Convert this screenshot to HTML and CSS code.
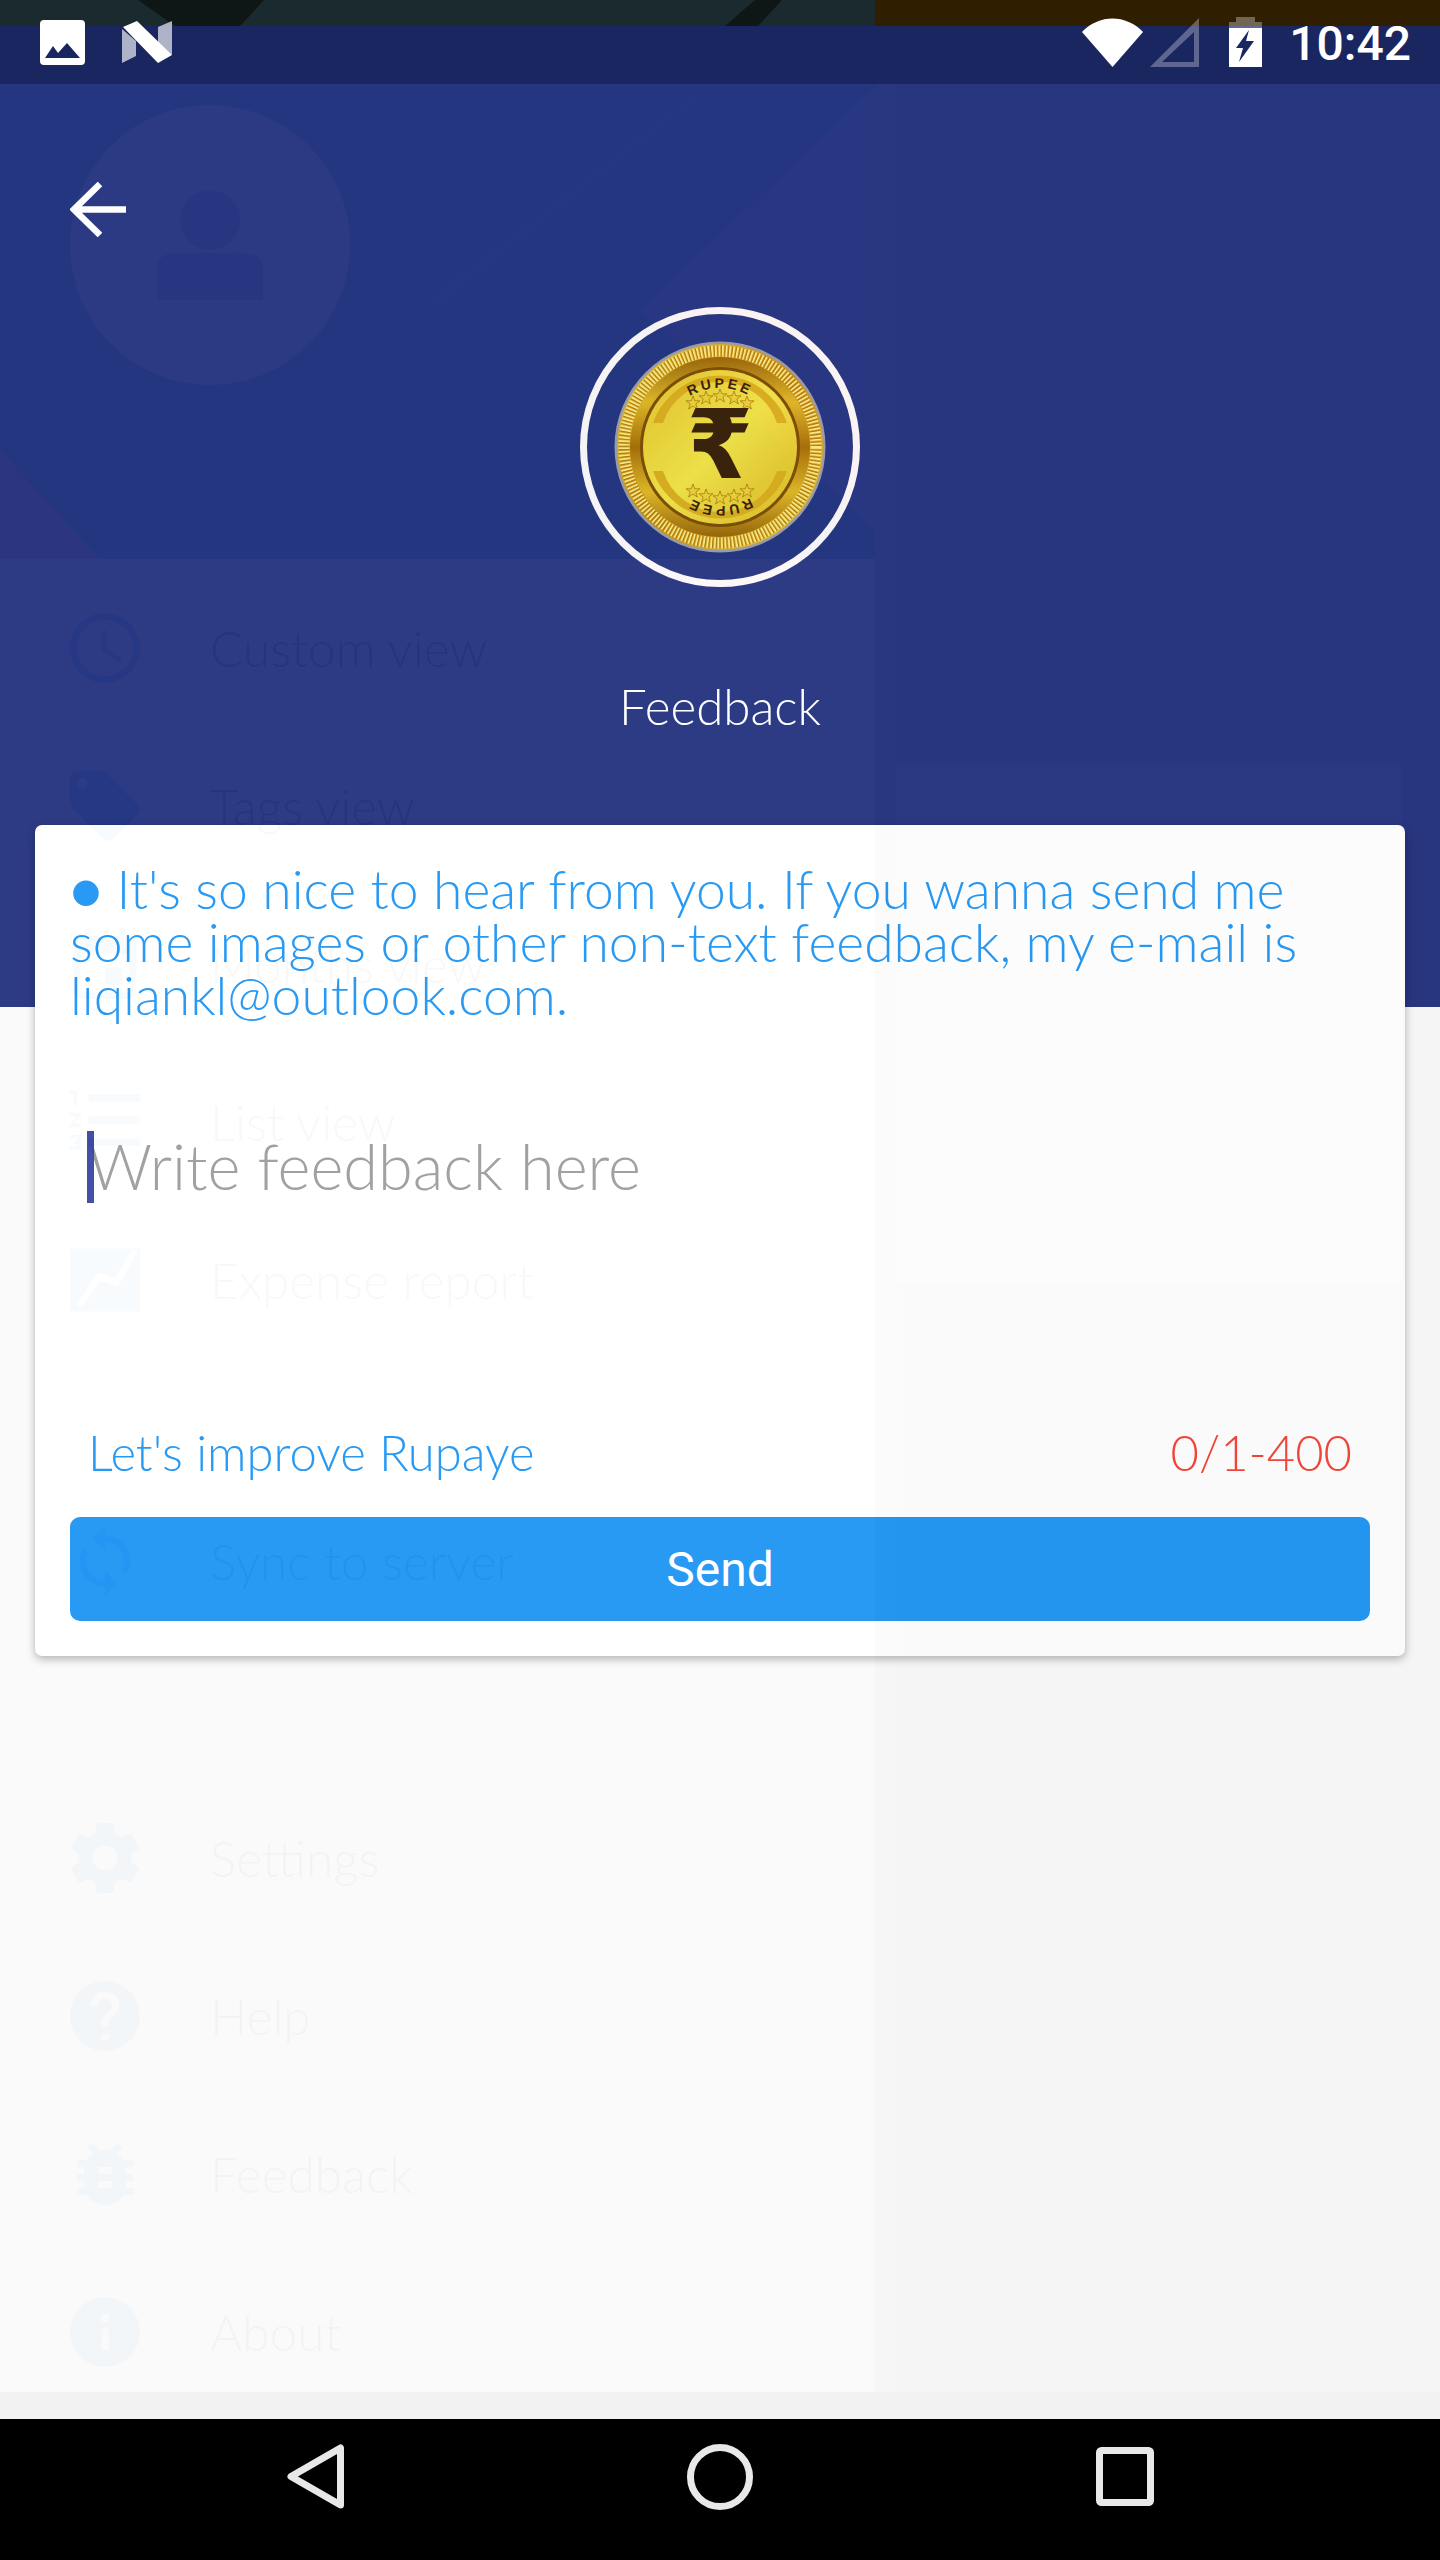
FILE: index.html
```html
<!DOCTYPE html>
<html lang="en">
<head>
<meta charset="utf-8">
<title>Feedback</title>
<link rel="stylesheet" href="styles.css">
</head>
<body>
<div class="screen">
  <header class="status">
    <svg class="wallpaper" viewBox="0 0 1440 26" aria-hidden="true">
      <polygon points="138,0 264,0 240,26 175,26" fill="#0e1616"/>
      <polygon points="755,0 782,0 758,26 725,26" fill="#0e1616"/>
    </svg>
    <svg class="st-img" viewBox="0 0 45 45" aria-hidden="true">
      <rect width="45" height="45" rx="4" fill="#fff"/>
      <path d="M5 38 13 26 18 33 27 23 40 38Z" fill="#1a2660"/>
    </svg>
    <svg class="st-n" viewBox="0 0 50 42" aria-hidden="true">
      <polygon points="0,8 0,42 14,35 14,20" fill="#fff" opacity=".65"/>
      <polygon points="50,0 36,6 36,23 50,34" fill="#fff" opacity=".65"/>
      <polygon points="1,6 15,0 50,34 36,42" fill="#fff"/>
    </svg>
    <div class="status-gap"></div>
    <svg class="st-wifi" viewBox="0 0 61 49" aria-hidden="true">
      <path d="M0 14C17-4 44-4 61 14L30.500 49Z" fill="#fff"/>
    </svg>
    <svg class="st-sig" viewBox="0 0 49 49" aria-hidden="true">
      <path d="M49 0V49H0ZM44 14 12 44H44Z" fill="#fff" fill-opacity=".3" fill-rule="evenodd"/>
    </svg>
    <svg class="st-bat" viewBox="0 0 33 50" aria-hidden="true">
      <path d="M7 0H26V5H33V13H0V5H7Z" fill="#fff" fill-opacity=".32"/>
      <path d="M0 11H33V50H0Z" fill="#fff"/>
      <path d="M20 13 7 31H14L10 45 25 24H17Z" fill="#1a2660"/>
    </svg>
    <span class="clock">10:42</span>
  </header>

  <section class="hero">
    <svg class="back" viewBox="0 0 56 55" aria-hidden="true">
      <path d="M56 27.500H5M30 2 4 27.500 30 53" fill="none" stroke="#fff" stroke-width="6.500"/>
    </svg>
    <div class="ring">
      <svg class="coin" viewBox="0 0 212 212" aria-label="Rupee coin logo">
        <defs>
          <linearGradient id="rim" x1="0" y1="0" x2="1" y2="1">
            <stop offset="0" stop-color="#f2cf3a"/><stop offset=".5" stop-color="#c98c0b"/><stop offset="1" stop-color="#f1cf3e"/>
          </linearGradient>
          <linearGradient id="band" x1="0" y1="0" x2="0" y2="1">
            <stop offset="0" stop-color="#9a6608"/><stop offset=".25" stop-color="#e2b824"/><stop offset=".5" stop-color="#a86e06"/><stop offset=".75" stop-color="#e2b824"/><stop offset="1" stop-color="#9a6608"/>
          </linearGradient>
          <linearGradient id="plate" x1="0" y1="0" x2="1" y2="1">
            <stop offset="0" stop-color="#e8c42a"/><stop offset=".5" stop-color="#f4e346"/><stop offset="1" stop-color="#dfb820"/>
          </linearGradient>
          <path id="arcT" d="M47 106A59 59 0 0 1 165 106"/>
          <path id="arcB" d="M165 106A59 59 0 0 1 47 106"/>
          <polygon id="star" points="0,-7 1.800,-2.200 7,-2.200 2.800,1 4.400,6 0,3 -4.400,6 -2.800,1 -7,-2.200 -1.800,-2.200"/>
        </defs>
        <circle cx="106" cy="106" r="105.500" fill="#9c9cab"/>
        <circle cx="106" cy="106" r="103" fill="url(#rim)"/>
        <circle cx="106" cy="106" r="96" fill="none" stroke="#fbe98a" stroke-width="11" stroke-dasharray="1.800 1.800"/>
        <circle cx="106" cy="106" r="96" fill="none" stroke="#b47a08" stroke-width="11" stroke-dasharray="1 2.600" stroke-dashoffset="1"/>
        <circle cx="106" cy="106" r="90" fill="url(#band)"/>
        <circle cx="106" cy="106" r="80" fill="#7d4c03"/>
        <circle cx="106" cy="106" r="77" fill="url(#plate)"/>
        <path d="M39 82A71 71 0 0 1 173 82L163 82A60 60 0 0 0 49 82Z" fill="#dcae1e"/>
        <path d="M39 130A71 71 0 0 0 173 130L163 130A60 60 0 0 1 49 130Z" fill="#dcae1e"/>
        <text class="coin-word"><textPath href="#arcT" startOffset="50%">RUPEE</textPath></text>
        <text class="coin-word"><textPath href="#arcB" startOffset="50%">RUPEE</textPath></text>
        <g fill="#efd139" stroke="#a97c0c" stroke-width=".8">
          <use href="#star" x="79" y="62"/><use href="#star" x="92" y="57"/><use href="#star" x="106" y="55"/><use href="#star" x="120" y="57"/><use href="#star" x="133" y="62"/>
          <use href="#star" x="79" y="150"/><use href="#star" x="92" y="155"/><use href="#star" x="106" y="157"/><use href="#star" x="120" y="155"/><use href="#star" x="133" y="150"/>
        </g>
        <text class="coin-sign" x="106" y="137">₹</text>
      </svg>
    </div>
    <div class="hero-title">Feedback</div>
  </section>

  <main class="sheet">
    <div class="card">
      <p class="note">● It's so nice to hear from you. If you wanna send me some images or other non-text feedback, my e-mail is liqiankl@outlook.com.</p>
      <div class="field">Write feedback here</div>
      <div class="meta">
        <span>Let's improve Rupaye</span>
        <span class="count">0/1-400</span>
      </div>
      <div class="send">Send</div>
    </div>
  </main>

  <nav class="nav">
    <svg class="nav-back" viewBox="0 0 57 65" aria-hidden="true">
      <path d="M53.500 4V61L4 32.500Z" fill="none" stroke="#e8e8e8" stroke-width="7" stroke-linejoin="round"/>
    </svg>
    <svg class="nav-home" viewBox="0 0 66 66" aria-hidden="true">
      <circle cx="33" cy="33" r="29.500" fill="none" stroke="#e8e8e8" stroke-width="7"/>
    </svg>
    <svg class="nav-rec" viewBox="0 0 58 59" aria-hidden="true">
      <rect x="3.500" y="3.500" width="51" height="52" rx="2" fill="none" stroke="#e8e8e8" stroke-width="7"/>
    </svg>
  </nav>

  <div class="ghost" aria-hidden="true">
    <div class="ghost-main">
      <aside class="drawer">
        <svg class="drawer-head" viewBox="0 0 875 475">
          <rect width="875" height="475" fill="#2f7f88"/>
          <polygon points="875,3 640,226 875,446" fill="#9a7890"/>
          <polygon points="689,13 427,216 440,222 700,13" fill="#6a7890"/>
          <polygon points="0,366 100,475 0,475" fill="#c87078"/>
          <circle cx="210" cy="161" r="140" fill="#e8e8e8"/>
          <ellipse cx="210" cy="136" rx="30" ry="30" fill="#4a8a98"/>
          <path d="M157 216V185C157 165 175 169 210 169S263 165 263 185V216Z" fill="#4a8a98"/>
        </svg>
        <div class="menu">
          <div class="item first">
            <svg class="ico" viewBox="2 2 20 20"><path d="M11.990 2C6.470 2 2 6.480 2 12s4.470 10 9.990 10C17.520 22 22 17.520 22 12S17.520 2 11.990 2zM12 20c-4.420 0-8-3.580-8-8s3.580-8 8-8 8 3.580 8 8-3.580 8-8 8zm.5-13H11v6l5.250 3.150.75-1.230-4.500-2.670z"/></svg>
            <span>Custom view</span>
          </div>
          <div class="item">
            <svg class="ico" viewBox="2 2 20 20"><path d="M21.410 11.580l-9-9C12.050 2.220 11.550 2 11 2H4c-1.100 0-2 .9-2 2v7c0 .55.22 1.050.59 1.420l9 9c.36.36.86.58 1.410.58.55 0 1.050-.22 1.410-.59l7-7c.37-.36.59-.86.59-1.410 0-.55-.23-1.060-.59-1.420zM5.500 7C4.670 7 4 6.330 4 5.500S4.670 4 5.500 4 7 4.670 7 5.500 6.330 7 5.500 7z"/></svg>
            <span>Tags view</span>
          </div>
          <div class="item">
            <svg class="ico" viewBox="3 1 18 20"><path d="M17 12h-5v5h5v-5zM16 1v2H8V1H6v2H5c-1.110 0-1.990.9-1.990 2L3 19c0 1.100.89 2 2 2h14c1.100 0 2-.9 2-2V5c0-1.100-.9-2-2-2h-1V1h-2zm3 18H5V8h14v11z"/></svg>
            <span>Months view</span>
          </div>
          <div class="item">
            <svg class="ico" viewBox="2 3 19 19"><path d="M2 17h2v.5H3v1h1v.5H2v1h3v-4H2v1zm1-9h1V4H2v1h1v3zm-1 3h1.800L2 13.100v.9h3v-1H3.200L5 10.900V10H2v1zm5-6v2h14V5H7zm0 14h14v-2H7v2zm0-6h14v-2H7v2z"/></svg>
            <span>List view</span>
          </div>
          <div class="item">
            <svg class="ico" viewBox="0 0 70 63"><path d="M0 0H70V63H0ZM8 58H12L30 32 48 38 68 2H62L45 30 28 24 8 54Z" fill-rule="evenodd"/></svg>
            <span>Expense report</span>
          </div>
          <div class="item sync">
            <svg class="ico" viewBox="3 1 18 22"><path d="M12 4V1L8 5l4 4V6c3.310 0 6 2.690 6 6 0 1.010-.25 1.970-.7 2.800l1.460 1.460C19.540 15.030 20 13.570 20 12c0-4.420-3.580-8-8-8zm0 14c-3.310 0-6-2.690-6-6 0-1.010.25-1.970.7-2.800L5.240 7.740C4.460 8.970 4 10.430 4 12c0 4.420 3.580 8 8 8v3l4-4-4-4v3z"/></svg>
            <span>Sync to server</span>
          </div>
          <div class="item settings">
            <svg class="ico" viewBox="2 2 20 20"><path d="M19.430 12.980c.04-.32.07-.64.07-.98s-.03-.66-.07-.98l2.110-1.650c.19-.15.24-.42.12-.64l-2-3.460c-.12-.22-.39-.3-.61-.22l-2.490 1c-.52-.4-1.080-.73-1.690-.98l-.38-2.650C14.460 2.180 14.250 2 14 2h-4c-.25 0-.46.18-.49.42l-.38 2.650c-.61.25-1.170.59-1.690.98l-2.490-1c-.23-.09-.49 0-.61.22l-2 3.460c-.13.22-.07.49.12.64l2.110 1.650c-.04.32-.07.65-.07.98s.03.66.07.98l-2.110 1.650c-.19.15-.24.42-.12.64l2 3.460c.12.22.39.3.61.22l2.490-1c.52.4 1.080.73 1.690.98l.38 2.650c.03.24.24.42.49.42h4c.25 0 .46-.18.49-.42l.38-2.650c.61-.25 1.170-.59 1.690-.98l2.490 1c.23.09.49 0 .61-.22l2-3.460c.12-.22.07-.49-.12-.64l-2.110-1.650zM12 15.500c-1.930 0-3.500-1.570-3.500-3.500s1.570-3.500 3.500-3.500 3.500 1.570 3.500 3.500-1.570 3.500-3.500 3.500z"/></svg>
            <span>Settings</span>
          </div>
          <div class="item">
            <svg class="ico" viewBox="2 2 20 20"><path d="M12 2C6.480 2 2 6.480 2 12s4.480 10 10 10 10-4.480 10-10S17.520 2 12 2zm1 17h-2v-2h2v2zm2.070-7.750l-.9.92C13.450 12.900 13 13.500 13 15h-2v-.5c0-1.100.45-2.100 1.170-2.830l1.240-1.260c.37-.36.59-.86.59-1.410 0-1.100-.9-2-2-2s-2 .9-2 2H8c0-2.210 1.790-4 4-4s4 1.790 4 4c0 .88-.36 1.680-.93 2.250z"/></svg>
            <span>Help</span>
          </div>
          <div class="item">
            <svg class="ico" viewBox="3 2 18 20"><path d="M20 8h-2.810c-.45-.78-1.070-1.450-1.820-1.960L17 4.410 15.590 3l-2.170 2.170C12.960 5.060 12.490 5 12 5c-.49 0-.96.06-1.410.17L8.410 3 7 4.410l1.620 1.630C7.880 6.550 7.260 7.220 6.810 8H4v2h2.090c-.05.33-.09.66-.09 1v1H4v2h2v1c0 .34.04.67.09 1H4v2h2.810c1.040 1.790 2.970 3 5.190 3s4.150-1.210 5.190-3H20v-2h-2.090c.05-.33.09-.66.09-1v-1h2v-2h-2v-1c0-.34-.04-.67-.09-1H20V8zm-6 8h-4v-2h4v2zm0-4h-4v-2h4v2z"/></svg>
            <span>Feedback</span>
          </div>
          <div class="item">
            <svg class="ico" viewBox="2 2 20 20"><path d="M12 2C6.480 2 2 6.480 2 12s4.480 10 10 10 10-4.480 10-10S17.520 2 12 2zm1 15h-2v-6h2v6zm0-8h-2V7h2v2z"/></svg>
            <span>About</span>
          </div>
        </div>
      </aside>
      <div class="dim"><div class="dim-card"></div></div>
    </div>
    <div class="ghost-foot"></div>
  </div>
</div>
</body>
</html>
```

FILE: styles.css
```css
* { box-sizing: border-box; }
html, body { margin: 0; padding: 0; }
body { background: #fafafa; font-family: "Lato", "Liberation Sans", sans-serif; font-weight: 300; }

.screen {
  position: relative;
  width: 1440px;
  height: 2560px;
  overflow: hidden;
  display: flex;
  flex-direction: column;
  background: #fafafa;
}

/* status bar */
.status {
  position: relative;
  height: 84px;
  flex: none;
  display: flex;
  align-items: center;
  padding: 0 29px 0 40px;
  background:
    linear-gradient(#2f1e00, #2f1e00) right top / 565px 26px no-repeat,
    linear-gradient(#1b2a2e, #1b2a2e) left top / 875px 26px no-repeat,
    #1a2660;
}
.wallpaper { position: absolute; left: 0; top: 0; width: 1440px; height: 26px; }
.status svg:not(.wallpaper) { position: relative; display: block; flex: none; }
.st-img { width: 45px; height: 45px; }
.st-n { width: 50px; height: 42px; margin-left: 37px; }
.status-gap { flex: 1; }
.st-wifi { width: 61px; height: 49px; }
.st-sig { width: 49px; height: 49px; margin-left: 7px; }
.st-bat { width: 33px; height: 50px; margin-left: 30px; }
.clock {
  position: relative;
  margin-left: 27px;
  padding-top: 3px;
  font-family: "Roboto", sans-serif;
  font-weight: 500;
  font-size: 48px;
  line-height: 56px;
  color: #fff;
}

/* hero */
.hero {
  height: 923px;
  flex: none;
  display: flex;
  flex-direction: column;
  align-items: center;
  padding-top: 98px;
  background: #253381;
}
.back { display: block; width: 56px; height: 55px; align-self: flex-start; margin-left: 70px; }
.ring {
  width: 280px;
  height: 280px;
  margin-top: 70px;
  border: 7px solid #fdf8f8;
  border-radius: 50%;
  display: flex;
  align-items: center;
  justify-content: center;
}
.coin { display: block; width: 212px; height: 212px; }
.coin-word {
  font-family: "Liberation Sans", sans-serif;
  font-weight: 700;
  font-size: 14px;
  letter-spacing: 3px;
  text-anchor: middle;
  fill: #3a2008;
}
.coin-sign {
  font-family: "DejaVu Sans", sans-serif;
  font-weight: 700;
  font-size: 96px;
  text-anchor: middle;
  fill: #3a2008;
}
.hero-title {
  margin-top: 91px;
  font-size: 49.300px;
  line-height: 56px;
  color: #fff;
}

/* sheet and card */
.sheet { flex: 1; min-height: 0; }
.card {
  height: 831px;
  margin: -182px 35px 0;
  padding: 37px 35px 0;
  background: #fff;
  border-radius: 7px;
  box-shadow: 0 3px 8px rgba(0, 0, 0, .3);
  display: flex;
  flex-direction: column;
  color: #2196f3;
}
.note { margin: 0; font-size: 53.400px; line-height: 53px; }
.field {
  position: relative;
  height: 72px;
  margin: 110px 0 0 18px;
  font-size: 63px;
  line-height: 70px;
  color: #9e9e9e;
}
.field::before {
  content: "";
  position: absolute;
  left: -1px;
  top: 0;
  width: 7px;
  height: 72px;
  background: rgba(48, 63, 159, .95);
}
.meta {
  display: flex;
  justify-content: space-between;
  margin: 222px 18px 0 18px;
  font-size: 49px;
  line-height: 54px;
}
.count { color: #f44336; }
.send {
  height: 104px;
  margin-top: 38px;
  padding-top: 2px;
  border-radius: 10px;
  background: #2196f3;
  color: #fff;
  font-family: "Roboto", sans-serif;
  font-weight: 400;
  font-size: 48px;
  line-height: 102px;
  text-align: center;
}

/* nav bar */
.nav {
  height: 141px;
  flex: none;
  display: flex;
  align-items: center;
  justify-content: space-between;
  padding: 0 286px 26px 287px;
  background: #000;
}
.nav svg { display: block; flex: none; }
.nav-back { width: 57px; height: 65px; }
.nav-home { width: 66px; height: 66px; }
.nav-rec { width: 58px; height: 59px; }

/* the drawer that is still fading out over the page */
.ghost {
  position: absolute;
  left: 0;
  top: 84px;
  width: 1440px;
  height: 2335px;
  opacity: .04;
  display: flex;
  flex-direction: column;
  pointer-events: none;
}
.ghost-main { flex: 1; min-height: 0; display: flex; }
.ghost-foot { height: 27px; flex: none; background: #323232; }
.drawer { width: 875px; flex: none; background: #fff; }
.drawer-head { display: block; width: 875px; height: 475px; }
.dim {
  flex: 1;
  padding: 679px 37px 0 20px;
  background: linear-gradient(#9c9c9c, #9c9c9c) left top / 22px 100% no-repeat, #828282;
}
.dim-card { height: 519px; background: #a8a8b8; border-radius: 7px; }
.menu { display: flex; flex-direction: column; gap: 58px; padding: 39px 0 0 70px; }
.item {
  display: flex;
  align-items: center;
  gap: 70px;
  height: 100px;
  font-size: 49.500px;
  color: #555;
}
.ico { display: block; width: 70px; height: 70px; flex: none; fill: #4f94d8; }
.item.sync { margin-top: 123px; }
.item.settings { margin-top: 139px; }
```
